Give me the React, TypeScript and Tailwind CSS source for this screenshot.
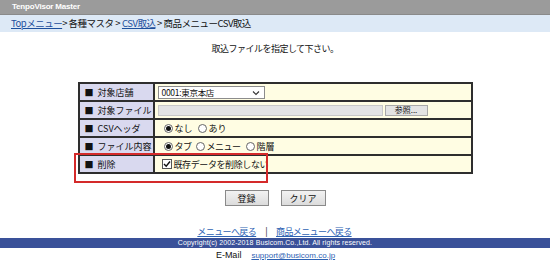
import React from 'react';

const jp = "font-['Noto_Sans_CJK_JP','Liberation_Sans',sans-serif]";

const Radio = ({ on }: { on?: boolean }) => (
  <span className="inline-flex items-center justify-center w-[9px] h-[9px] rounded-full border border-[#666] bg-white mr-[2px]">
    {on && <span className="w-[5px] h-[5px] rounded-full bg-[#111]" />}
  </span>
);

const Label = ({ text }: { text: string }) => (
  <td className="w-[75px] bg-[#d9d9ef] border-2 border-[#2e2e2e] pl-[5px] p-0 text-[9px] leading-none text-[#111] whitespace-nowrap">
    <span className="mr-[4px]">■</span>
    {text}
  </td>
);

const Value = ({ children }: { children: React.ReactNode }) => (
  <td className="bg-[#fffde3] border-2 border-[#2e2e2e] pl-[3px] p-0 text-[9px] leading-none text-[#111] h-[17px]">
    <div className="flex items-center h-[16px]">{children}</div>
  </td>
);

const App: React.FC = () => {
  return (
    <div className={`w-[550px] h-[271px] bg-white overflow-hidden ${jp}`}>
      {/* Title bar */}
      <div className="h-[15px] bg-[#9b9b9b] border-b border-[#8a8a8a] pl-[12px] text-left leading-[14px] text-[8px] font-bold text-white font-['Liberation_Sans',sans-serif] tracking-[-0.2px]">
        TenpoVisor Master
      </div>

      {/* Breadcrumb */}
      <div className="h-[17px] bg-[#dde9f6] flex items-center pl-[11px] text-[9.5px] text-[#111] tracking-[-0.5px] whitespace-nowrap">
        <a className="text-[#1d4f9c] underline">Topメニュー</a>
        <span>&gt; 各種マスタ &gt; </span>
        <a className="text-[#1d4f9c] underline ml-[2px]">CSV取込</a>
        <span>&nbsp;&gt; 商品メニューCSV取込</span>
      </div>

      {/* Subtitle */}
      <div className="mt-[10px] h-[14px] flex items-center justify-center text-[9px] text-[#111] tracking-[-0.5px]">
        取込ファイルを指定して下さい。
      </div>

      {/* Form table */}
      <div className="relative w-[395px] mx-auto mt-[26px]">
        <table className="w-full border-collapse border-2 border-[#222]">
          <tbody>
            <tr>
              <Label text="対象店舗" />
              <Value>
                <div className="relative w-[107px] h-[13px] bg-white border border-[#8c8c8c] flex items-center pl-[3px] text-[8.5px] tracking-[-0.3px]">
                  0001:東京本店
                  <svg className="absolute right-[4px] top-[3px]" width="8" height="6" viewBox="0 0 8 6">
                    <path d="M1 1.5 L4 4.5 L7 1.5" fill="none" stroke="#333" strokeWidth="1.1" />
                  </svg>
                </div>
              </Value>
            </tr>
            <tr>
              <Label text="対象ファイル" />
              <Value>
                <div className="w-[225px] h-[11px] bg-[#e3e3e3] border border-[#c8c8c8]" />
                <div className="ml-[2px] w-[43px] h-[11px] bg-[#e3e3e3] border border-[#a8a8a8] flex items-center justify-center text-[8px]">
                  参照...
                </div>
              </Value>
            </tr>
            <tr>
              <Label text="CSVヘッダ" />
              <Value>
                <span className="ml-[6px] flex items-center"><Radio on />なし</span>
                <span className="ml-[5px] flex items-center"><Radio />あり</span>
              </Value>
            </tr>
            <tr>
              <Label text="ファイル内容" />
              <Value>
                <span className="ml-[6px] flex items-center tracking-[-0.5px]"><Radio on />タブ</span>
                <span className="ml-[4px] flex items-center tracking-[-0.5px]"><Radio />メニュー</span>
                <span className="ml-[5px] flex items-center"><Radio />階層</span>
              </Value>
            </tr>
            <tr>
              <Label text="削除" />
              <Value>
                <span className="ml-[4px] flex items-center tracking-[-0.4px]">
                  <span className="w-[10px] h-[10px] bg-white border border-[#555] mr-[2px] flex items-center justify-center">
                    <svg width="8" height="8" viewBox="0 0 8 8">
                      <path d="M1 4 L3.2 6.3 L7 1.5" fill="none" stroke="#111" strokeWidth="1.4" />
                    </svg>
                  </span>
                  既存データを削除しない
                </span>
              </Value>
            </tr>
          </tbody>
        </table>
        {/* Highlight box */}
        <div className="absolute left-[-4px] top-[71px] w-[194px] h-[30px] border-2 border-[#d42a2a] pointer-events-none" />
      </div>

      {/* Buttons */}
      <div className="mt-[16px] flex justify-center gap-[12px]">
        <button className="w-[44px] h-[16px] bg-gradient-to-b from-[#f2f2f2] to-[#dcdcdc] border border-[#8a8a8a] text-[9px] text-[#111] leading-none">
          登録
        </button>
        <button className="w-[45px] h-[16px] bg-gradient-to-b from-[#f2f2f2] to-[#dcdcdc] border border-[#8a8a8a] text-[9px] text-[#111] leading-none">
          クリア
        </button>
      </div>

      {/* Links */}
      <div className="mt-[19px] h-[13px] flex items-center justify-center text-[9px] tracking-[-0.6px] pr-[1px]">
        <a className="text-[#2e62b3] underline">メニューへ戻る</a>
        <span className="mx-[9px] text-[#222]">|</span>
        <a className="text-[#2e62b3] underline">商品メニューへ戻る</a>
      </div>

      {/* Copyright */}
      <div className="h-[10px] bg-[#3a5199] flex items-center justify-center">
        <span className="text-[7px] text-white font-['Liberation_Sans',sans-serif] tracking-[0.1px]">
          Copyright(c) 2002-2018 Busicom.Co.,Ltd. All rights reserved.
        </span>
      </div>

      {/* Mail */}
      <div className="mt-[2px] h-[12px] flex items-center justify-center font-['Liberation_Sans',sans-serif] pl-[1px]">
        <span className="text-[9px] text-[#111]">E-Mail</span>
        <a className="ml-[10px] text-[8px] text-[#2e62b3] underline">support@busicom.co.jp</a>
      </div>
    </div>
  );
};

export default App;
